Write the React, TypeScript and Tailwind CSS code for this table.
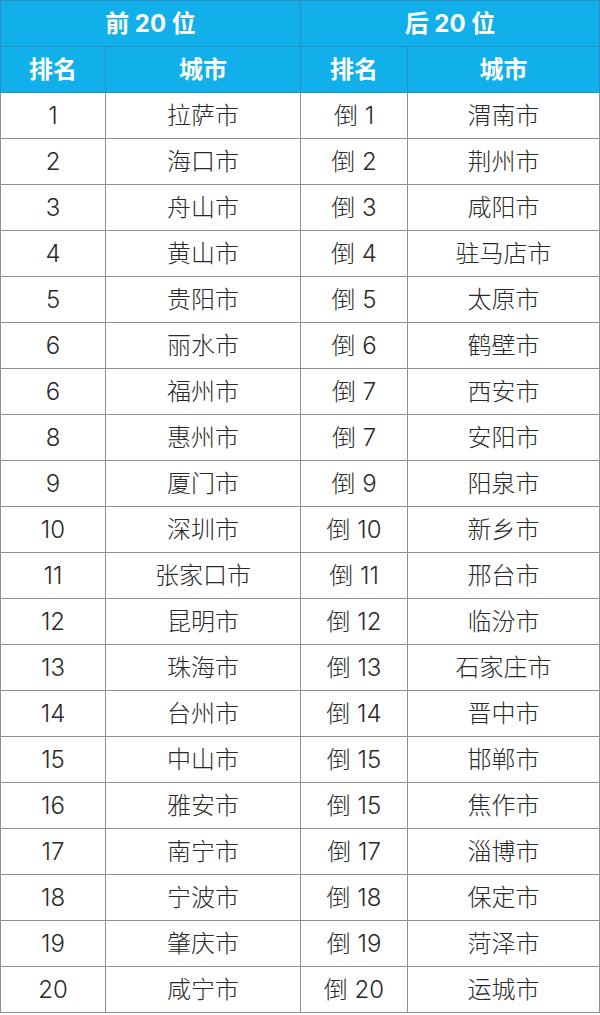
const rows: [string, string, string, string][] = [
  ["1", "拉萨市", "倒 1", "渭南市"],
  ["2", "海口市", "倒 2", "荆州市"],
  ["3", "舟山市", "倒 3", "咸阳市"],
  ["4", "黄山市", "倒 4", "驻马店市"],
  ["5", "贵阳市", "倒 5", "太原市"],
  ["6", "丽水市", "倒 6", "鹤壁市"],
  ["6", "福州市", "倒 7", "西安市"],
  ["8", "惠州市", "倒 7", "安阳市"],
  ["9", "厦门市", "倒 9", "阳泉市"],
  ["10", "深圳市", "倒 10", "新乡市"],
  ["11", "张家口市", "倒 11", "邢台市"],
  ["12", "昆明市", "倒 12", "临汾市"],
  ["13", "珠海市", "倒 13", "石家庄市"],
  ["14", "台州市", "倒 14", "晋中市"],
  ["15", "中山市", "倒 15", "邯郸市"],
  ["16", "雅安市", "倒 15", "焦作市"],
  ["17", "南宁市", "倒 17", "淄博市"],
  ["18", "宁波市", "倒 18", "保定市"],
  ["19", "肇庆市", "倒 19", "菏泽市"],
  ["20", "咸宁市", "倒 20", "运城市"],
];

const head = "border border-[#2a8fbf] bg-[#12b0ea] text-white font-bold text-[24px] p-0";
const cell = "border border-[#8e8e8e] text-[#2a2a2a] font-light text-[24px] p-0";

export default function App() {
  return (
    <div className="w-[600px] bg-white font-['Inter','Noto_Sans_CJK_SC',sans-serif]">
      <table className="w-[599px] table-fixed border-collapse text-center">
        <colgroup>
          <col className="w-[105px]" />
          <col className="w-[195px]" />
          <col className="w-[107px]" />
          <col className="w-[192px]" />
        </colgroup>
        <thead>
          <tr className="h-[46px]">
            <th colSpan={2} className={head}>前 20 位</th>
            <th colSpan={2} className={head}>后 20 位</th>
          </tr>
          <tr className="h-[46px]">
            <th className={head}>排名</th>
            <th className={head}>城市</th>
            <th className={head}>排名</th>
            <th className={head}>城市</th>
          </tr>
        </thead>
        <tbody>
          {rows.map((r, i) => (
            <tr key={i} className="h-[46px]">
              {r.map((v, j) => (
                <td key={j} className={cell}>{v}</td>
              ))}
            </tr>
          ))}
        </tbody>
      </table>
    </div>
  );
}
